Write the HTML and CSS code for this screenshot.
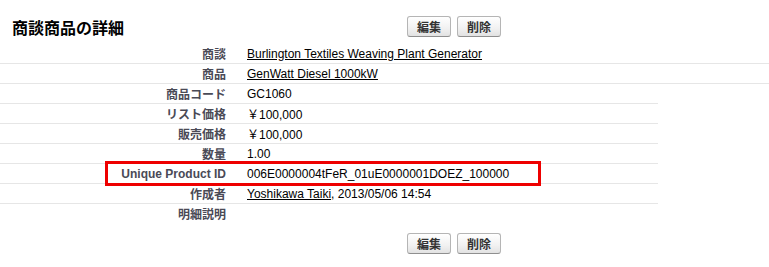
FILE: index.html
```html
<!DOCTYPE html>
<html lang="ja">
<head>
    <meta charset="UTF-8">
    <title>商談商品の詳細</title>
    <link rel="stylesheet" href="styles.css">
</head>
<body>
    <div class="detail">
        <div class="header">
            <h2 class="title">商談商品の詳細</h2>
            <div class="buttons">
                <button class="btn">編集</button>
                <button class="btn">削除</button>
            </div>
        </div>

        <div class="rows">
            <div class="row wide">
                <div class="label">商談</div>
                <div class="value"><a href="#">Burlington Textiles Weaving Plant Generator</a></div>
            </div>
            <div class="row wide">
                <div class="label">商品</div>
                <div class="value"><a href="#">GenWatt Diesel 1000kW</a></div>
            </div>
            <div class="row">
                <div class="label">商品コード</div>
                <div class="value">GC1060</div>
            </div>
            <div class="row">
                <div class="label">リスト価格</div>
                <div class="value">￥100,000</div>
            </div>
            <div class="row">
                <div class="label">販売価格</div>
                <div class="value">￥100,000</div>
            </div>
            <div class="row">
                <div class="label">数量</div>
                <div class="value">1.00</div>
            </div>
            <div class="row marked">
                <div class="label">Unique Product ID</div>
                <div class="value">006E0000004tFeR_01uE0000001DOEZ_100000</div>
                <!-- highlight box drawn over the row -->
                <div class="highlight"></div>
            </div>
            <div class="row">
                <div class="label">作成者</div>
                <div class="value"><a href="#">Yoshikawa Taiki</a>, 2013/05/06 14:54</div>
            </div>
            <div class="row last">
                <div class="label">明細説明</div>
                <div class="value"></div>
            </div>
        </div>

        <div class="footer">
            <div class="buttons">
                <button class="btn">編集</button>
                <button class="btn">削除</button>
            </div>
        </div>
    </div>
</body>
</html>
```

FILE: styles.css
```css
body {
    margin: 0;
    font-family: "Liberation Sans", "Noto Sans CJK JP", sans-serif;
    font-size: 12px;
    color: #000;
    background-color: #fff;
}

.header {
    display: flex;
    align-items: center;
    padding: 16px 0 0 12px;
    height: 21px;
    margin-bottom: 7px;
}

.title {
    width: 395px;
    margin: 0;
    font-size: 16px;
    font-weight: bold;
    color: #000;
}

.buttons {
    display: flex;
    gap: 6px;
}

.btn {
    height: 21px;
    width: 44px;
    padding: 0;
    font-family: "Liberation Sans", "Noto Sans CJK JP", sans-serif;
    font-size: 12px;
    font-weight: bold;
    color: #333;
    background: linear-gradient(#ffffff, #f1f1f1 60%, #e2e2e2);
    border: 1px solid #b5b5b5;
    border-bottom-color: #8f8f8f;
    border-radius: 3px;
    cursor: pointer;
}

.row {
    display: flex;
    align-items: center;
    height: 19px;
    width: 658px;
    border-bottom: 1px solid #e6e6e6;
    position: relative;
}

.row.wide {
    width: 100%;
}

.row.last {
    border-bottom: none;
}

.label {
    width: 226px;
    text-align: right;
    font-weight: bold;
    color: #4a4a56;
}

.value {
    padding-left: 21px;
    white-space: nowrap;
}

.value a {
    color: #000;
    text-decoration: underline;
}

.highlight {
    position: absolute;
    left: 105px;
    top: -3px;
    width: 436px;
    height: 25px;
    box-sizing: border-box;
    border: 3px solid #ee0000;
}

.footer {
    padding: 10px 0 0 407px;
}
```
